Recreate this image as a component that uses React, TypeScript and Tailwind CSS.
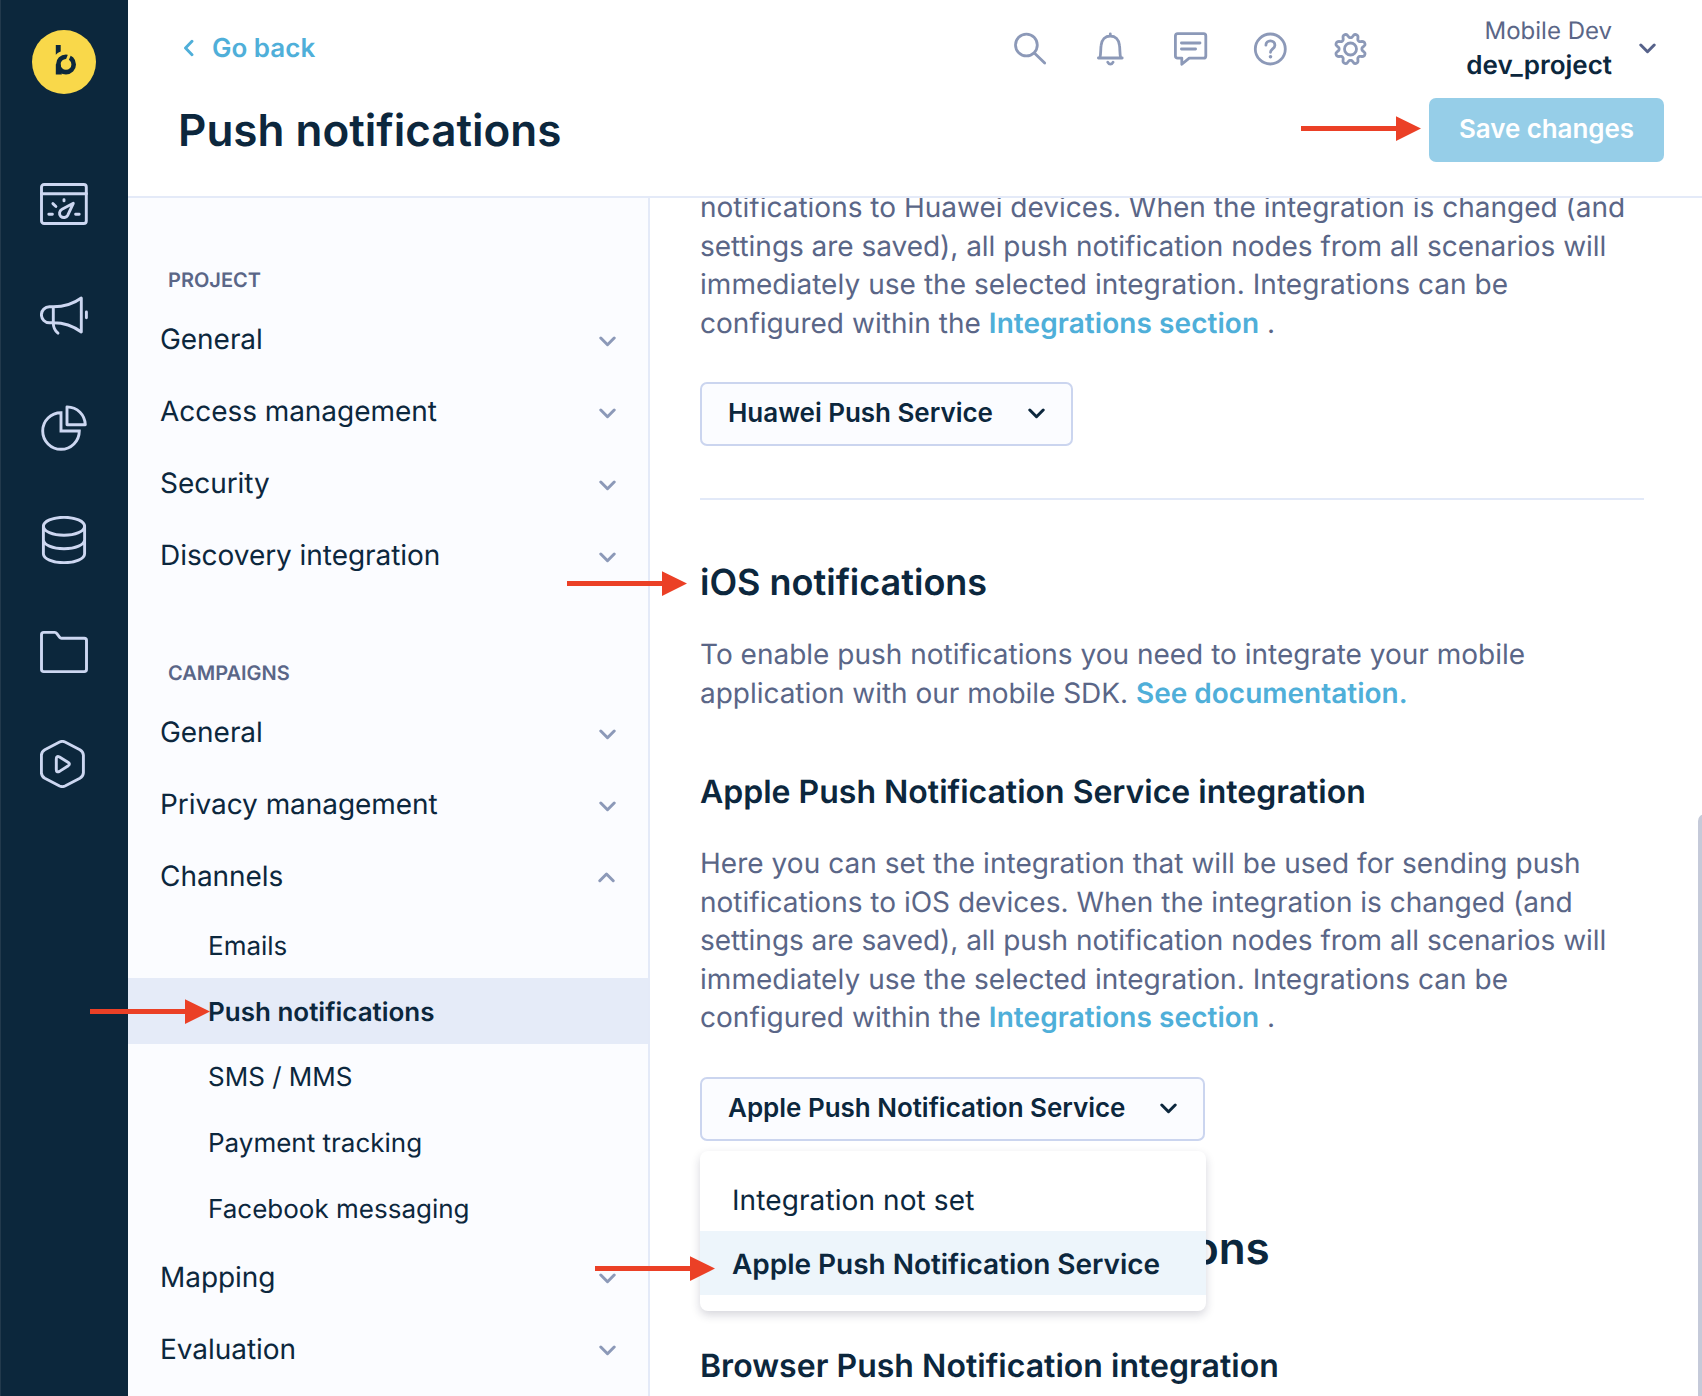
import React from "react";

type SectionItem = { label: string; open?: boolean; children?: { label: string; active?: boolean }[] };

const projectItems: SectionItem[] = [
  { label: "General" },
  { label: "Access management" },
  { label: "Security" },
  { label: "Discovery integration" },
];

const campaignItems: SectionItem[] = [
  { label: "General" },
  { label: "Privacy management" },
  {
    label: "Channels",
    open: true,
    children: [
      { label: "Emails" },
      { label: "Push notifications", active: true },
      { label: "SMS / MMS" },
      { label: "Payment tracking" },
      { label: "Facebook messaging" },
    ],
  },
  { label: "Mapping" },
  { label: "Evaluation" },
];

function Chevron({ up = false, className = "" }: { up?: boolean; className?: string }) {
  return (
    <svg
      width="17"
      height="11"
      viewBox="0 0 17 11"
      fill="none"
      stroke="currentColor"
      strokeWidth="3"
      strokeLinecap="round"
      strokeLinejoin="round"
      className={"shrink-0 " + className}
    >
      <path d={up ? "M1.8 8.7 8.5 2 15.2 8.7" : "M1.8 2 8.5 8.7 15.2 2"} />
    </svg>
  );
}

function RailIcon({ children }: { children: React.ReactNode }) {
  return (
    <svg
      width="48"
      height="48"
      viewBox="0 0 48 48"
      fill="none"
      stroke="currentColor"
      strokeWidth="2.9"
      strokeLinecap="round"
      strokeLinejoin="round"
    >
      {children}
    </svg>
  );
}

function HeaderIcon({ children }: { children: React.ReactNode }) {
  return (
    <svg
      width="36"
      height="36"
      viewBox="0 0 36 36"
      fill="none"
      stroke="currentColor"
      strokeWidth="2.8"
      strokeLinecap="round"
      strokeLinejoin="round"
    >
      {children}
    </svg>
  );
}

function Logo() {
  return (
    <svg width="64" height="64" viewBox="0 0 64 64">
      <circle cx="32" cy="32" r="32" fill="#f9d84a" />
      <path d="M23.8 15h4.9v6.6q-2.900 1-4.900 3.200z" fill="#0c273c" />
      <circle cx="34" cy="34.400" r="7.700" fill="none" stroke="#0c273c" strokeWidth="4.600" />
      <path d="M23.800 34.200h4.800l1.200 6.200v4h-6z" fill="#0c273c" />
      <path d="M38.400 22.500 34.400 32" stroke="#f9d84a" strokeWidth="3" />
    </svg>
  );
}

const gearPath =
  Array.from({ length: 120 }, (_, i) => {
    const a = (i / 120) * Math.PI * 2;
    const wave = Math.tanh(1.6 * Math.cos(8 * (a - Math.PI / 8))) / Math.tanh(1.6);
    const r = 13.4 + 2 * wave;
    return `${i ? "L" : "M"}${(18.5 + r * Math.cos(a)).toFixed(2)} ${(18 + r * Math.sin(a)).toFixed(2)}`;
  }).join("") + "Z";

function Arrow({ className }: { className: string }) {
  return (
    <svg width="120" height="26" viewBox="0 0 120 26" fill="#eb4026" className={"absolute z-30 " + className}>
      <path d="M0 10H95V0.200L120 12.600 95 25V15H0z" />
    </svg>
  );
}

function Rail() {
  return (
    <aside className="flex w-32 shrink-0 flex-col items-center border-l border-[#22394c] bg-[#0c273c] pt-[30px] pr-px text-[#cdd7f1]">
      <Logo />
      <nav className="mt-[86px] flex flex-col gap-16">
        <RailIcon>
          <rect x="1.500" y="4.500" width="44.800" height="39" rx="2.600" />
          <path d="M1.500 13.700H46.500M8.800 34.300h3.600M35.600 34.300h3.600M24 19.600v1.300M12.900 23.600l3 2.900" />
          <path d="M33.300 23.300 22 29.200c-2.600 1.400-3.400 5-1.200 7.200 2.300 2 5.600 1.300 7-1.200z" />
        </RailIcon>
        <RailIcon>
          <path d="M13.300 14.800H9.400a8 8 0 0 0 0 16h3.900zc11 0 19.700-2.700 28-8.800V40c-8.300-6.100-17-9.200-28-9.200" />
          <path d="M13.300 31c0 4.800 1.300 7.500 4.700 10.200M46.400 20v5.800" />
        </RailIcon>
        <RailIcon>
          <path d="M21 8.700V27h18.300A18.300 18.300 0 1 1 21 8.700z" strokeLinejoin="miter" />
          <path d="M27 2.900v17.900h18.300C45 11 37.500 3.200 27 2.900z" />
        </RailIcon>
        <RailIcon>
          <ellipse cx="24" cy="10.300" rx="20.600" ry="9" />
          <path d="M3.400 10.300v27.400c0 5 9.200 9 20.600 9s20.600-4 20.600-9V10.300M3.400 23.700c0 5 9.200 9 20.600 9s20.600-4 20.600-9" />
        </RailIcon>
        <RailIcon>
          <path d="M1.500 6.700a2.300 2.300 0 0 1 2.300-2.300h11q1.200 0 1.900 1l3 4q.7.900 1.800.900h22.700a2.300 2.300 0 0 1 2.300 2.300v28.700a2.300 2.300 0 0 1-2.300 2.300H3.800a2.300 2.300 0 0 1-2.300-2.300z" />
        </RailIcon>
        <RailIcon>
          <path d="M19.600 2q2.700-1.200 5.400 0l14.900 7.700q3.200 1.900 3.500 5.500v17.600q-.3 3.600-3.500 5.500L25 46q-2.700 1.200-5.400 0L4.800 38.300q-3.200-1.900-3.400-5.500V15.200q.2-3.600 3.400-5.500z" />
          <path d="M16.300 19q0-3.600 3.200-2l8.800 5.500q2.200 1.600 0 3.200l-8.800 5.700q-3.200 1.600-3.200-2z" />
        </RailIcon>
      </nav>
    </aside>
  );
}

function Header() {
  return (
    <header className="flex h-[198px] shrink-0 justify-between border-b-2 border-[#e4eaf8] bg-white">
      <div className="flex flex-col">
        <div className="mt-8 ml-[55px] flex h-8 items-center gap-[18px] text-[26px] font-semibold text-[#4fafd9]">
          <svg
            width="11"
            height="18"
            viewBox="0 0 11 18"
            fill="none"
            stroke="currentColor"
            strokeWidth="2.9"
            strokeLinecap="round"
            strokeLinejoin="round"
          >
            <path d="M9 2.200 2.500 9 9 15.800" />
          </svg>
          Go back
        </div>
        <h1 className="mt-[39px] ml-[50px] text-[44px] leading-[54px] font-semibold">Push notifications</h1>
      </div>
      <div className="mr-[38px] flex flex-col items-end">
        <div className="mr-2 flex h-[98px] items-start">
          <div className="mt-[31px] flex gap-11 text-[#8c99b8]">
            <HeaderIcon>
              <circle cx="14.400" cy="14" r="10.900" />
              <path d="M22.600 22.200 32.700 32.100" />
            </HeaderIcon>
            <HeaderIcon>
              <path d="M18.300 2.900v2M6.400 27h23.800M7.900 26.600c1.100-3.300.6-7.900 1.200-12.200C9.700 8.700 13.300 5 18.300 5s8.600 3.700 9.200 9.400c.6 4.300.1 8.900 1.200 12.200" />
              <path d="M15.700 31.200q1 2 2.700 2t2.700-2" />
            </HeaderIcon>
            <HeaderIcon>
              <path d="M5.600 2.700h26q2.200 0 2.200 2.200v20q0 2.200-2.200 2.200H17.200l-7.400 6.200v-6.200H5.600q-2.200 0-2.200-2.200v-20q0-2.200 2.200-2.200z" />
              <path d="M9.400 12h18.600M9.400 18h14.200" />
            </HeaderIcon>
            <HeaderIcon>
              <circle cx="18.300" cy="18" r="15" />
              <path d="M13.900 14.200c0-2.600 2-4.300 4.500-4.300 2.600 0 4.500 1.800 4.500 4.300 0 3.600-4.400 3.700-4.400 7.100" />
              <circle cx="18.500" cy="25.800" r="1.800" fill="currentColor" stroke="none" />
            </HeaderIcon>
            <HeaderIcon>
              <path d={gearPath} />
              <circle cx="18.500" cy="18" r="6" />
            </HeaderIcon>
          </div>
          <div className="mt-[13px] -mr-px ml-[98px] flex flex-col items-end">
            <span className="text-2xl leading-[35px] text-[#5a6687]">Mobile Dev</span>
            <span className="text-[26px] leading-[35px] font-semibold">dev_project</span>
          </div>
          <Chevron className="mt-[43px] ml-[28px] text-[#56628a]" />
        </div>
        <button className="h-16 w-[235px] rounded-[7px] bg-[#96cee8] pb-[3px] text-[26px] font-semibold tracking-[-0.08px] text-white">
          Save changes
        </button>
      </div>
    </header>
  );
}

function Section({ title, items }: { title: string; items: SectionItem[] }) {
  return (
    <section className="pt-[62px]">
      <h2 className="mb-[3px] flex h-10 items-center pl-10 text-xl font-semibold text-[#5a6687]">{title}</h2>
      {items.map((item) => (
        <React.Fragment key={item.label}>
          <div className="flex h-[72px] items-center justify-between pr-8 pl-8 text-[28px] tracking-[-0.05px]">
            <span>{item.label}</span>
            <Chevron up={item.open} className={item.open ? "mt-[3px] mr-px text-[#8c99b8]" : "mt-1 text-[#8c99b8]"} />
          </div>
          {item.children && (
            <ul>
              {item.children.map((child) => (
                <li
                  key={child.label}
                  className={
                    child.active
                      ? "flex h-[65.800px] items-center bg-[#e5ebf8] pt-[3px] pl-20 text-[26px] font-semibold"
                      : "flex h-[65.800px] items-center pt-[3px] pl-20 text-[26px]"
                  }
                >
                  {child.label}
                </li>
              ))}
            </ul>
          )}
        </React.Fragment>
      ))}
    </section>
  );
}

function SelectButton({ label }: { label: string }) {
  return (
    <button className="flex h-16 items-center rounded-[7px] border-2 border-[#cbd5ef] bg-[#fbfcff] px-[26px] text-[26px] font-semibold tracking-[-0.03px]">
      <span className="pb-[3px]">{label}</span>
      <Chevron className="ml-[35px]" />
    </button>
  );
}

function SharedIntegrationText() {
  return (
    <>
      <span className="tracking-[-0.03px]">settings are saved), all push notification nodes from all scenarios will</span>
      <br />
      <span className="tracking-[0.05px]">immediately use the selected integration. Integrations can be</span>
      <br />
      <span className="tracking-[0.03px]">
        configured within the{" "}
        <a className="font-semibold tracking-[0.07px] text-[#4fafd9]">Integrations section</a> .
      </span>
    </>
  );
}

function Content() {
  return (
    <main className="relative flex min-w-0 flex-1 flex-col items-start overflow-hidden bg-white pr-[58px] pl-[50px]">
      <p className="-mt-2.5 text-[28px] leading-[38.600px] whitespace-nowrap text-[#5a6687]">
        notifications to Huawei devices. When the integration is changed (and
        <br />
        <SharedIntegrationText />
      </p>
      <div className="mt-[39.600px]">
        <SelectButton label="Huawei Push Service" />
      </div>
      <hr className="mt-[52px] h-0.5 w-full shrink-0 border-0 bg-[#e2e9f8]" />

      <h2 className="mt-[60px] text-4xl leading-[44px] font-semibold">iOS notifications</h2>
      <p className="mt-[31px] text-[28px] leading-[38.600px] whitespace-nowrap text-[#5a6687]">
        To enable push notifications you need to integrate your mobile
        <br />
        <span className="tracking-[-0.03px]">application with our mobile SDK. </span>
        <a className="font-semibold text-[#4fafd9]">See documentation.</a>
      </p>

      <h3 className="mt-[60px] text-[32px] leading-10 font-semibold">Apple Push Notification Service integration</h3>
      <p className="mt-[32px] text-[28px] leading-[38.500px] whitespace-nowrap text-[#5a6687]">
        <span className="tracking-[0.04px]">Here you can set the integration that will be used for sending push</span>
        <br />
        notifications to iOS devices. When the integration is changed (and
        <br />
        <SharedIntegrationText />
      </p>
      <div className="relative mt-[40.300px]">
        <SelectButton label="Apple Push Notification Service" />
        <div className="absolute top-[74px] left-0 z-20 w-[506px] rounded-lg bg-white py-4 text-[28px] shadow-[0_4px_10px_rgba(30,30,60,0.18)]">
          <div className="flex h-16 items-center pt-0.5 pl-8 tracking-[0.1px]">Integration not set</div>
          <div className="flex h-16 items-center bg-[#edf5fb] pt-0.5 pl-8 font-semibold tracking-[-0.03px] whitespace-nowrap">
            Apple Push Notification Service
          </div>
        </div>
      </div>

      <h1 className="mt-[81px] text-[44px] leading-[52px] font-semibold whitespace-nowrap">Browser push notifications</h1>
      <h3 className="mt-[72px] text-[32px] leading-10 font-semibold tracking-[0.03px]">
        Browser Push Notification integration
      </h3>

      <div className="absolute top-[616px] -right-2.5 h-[620px] w-3.5 rounded-[7px] bg-[#c5cad9]" />
    </main>
  );
}

export default function App() {
  return (
    <div className="relative flex h-[1396px] w-[1702px] overflow-hidden bg-white font-['Inter',sans-serif] text-[#0c273d] [text-rendering:geometricPrecision]">
      <Rail />
      <div className="flex min-w-0 flex-1 flex-col">
        <Header />
        <div className="flex min-h-0 flex-1">
          <nav className="w-[522px] shrink-0 overflow-hidden border-r-2 border-[#e4eaf8] bg-[#fbfcff]">
            <Section title="PROJECT" items={projectItems} />
            <Section title="CAMPAIGNS" items={campaignItems} />
          </nav>
          <Content />
        </div>
      </div>
      <Arrow className="top-[116px] left-[1301px]" />
      <Arrow className="top-[571px] left-[567px]" />
      <Arrow className="top-[999px] left-[90px]" />
      <Arrow className="top-[1256px] left-[595px]" />
    </div>
  );
}
